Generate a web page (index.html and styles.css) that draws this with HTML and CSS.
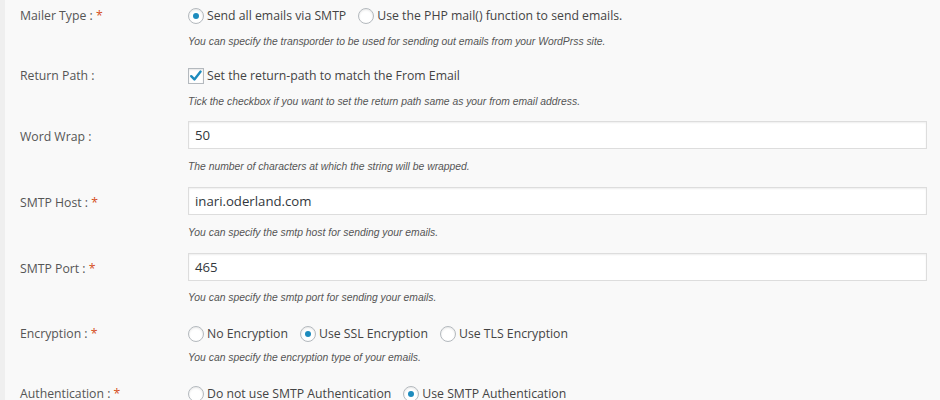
FILE: index.html
```html
<!DOCTYPE html>
<html>
<head>
<meta charset="utf-8">
<link rel="stylesheet" href="styles.css">
</head>
<body>
<div class="page">
  <div class="row row-first">
    <div class="label">Mailer Type : <span class="req">*</span></div>
    <div class="field">
      <div class="choices">
        <label class="choice"><span class="radio checked"></span>Send all emails via SMTP</label>
        <label class="choice"><span class="radio"></span>Use the PHP mail() function to send emails.</label>
      </div>
      <p class="desc">You can specify the transporder to be used for sending out emails from your WordPrss site.</p>
    </div>
  </div>

  <div class="row row-check">
    <div class="label">Return Path :</div>
    <div class="field">
      <div class="choices">
        <label class="choice"><span class="checkbox"><svg viewBox="0 0 16 16" width="16" height="16"><path d="M3.2 8.2 L6.4 11.4 L12.6 3.6" fill="none" stroke="#1e8cbe" stroke-width="2.4" stroke-linecap="round" stroke-linejoin="round"/></svg></span>Set the return-path to match the From Email</label>
      </div>
      <p class="desc">Tick the checkbox if you want to set the return path same as your from email address.</p>
    </div>
  </div>

  <div class="row row-input">
    <div class="label">Word Wrap :</div>
    <div class="field">
      <div class="input">50</div>
      <p class="desc">The number of characters at which the string will be wrapped.</p>
    </div>
  </div>

  <div class="row row-input">
    <div class="label">SMTP Host : <span class="req">*</span></div>
    <div class="field">
      <div class="input">inari.oderland.com</div>
      <p class="desc">You can specify the smtp host for sending your emails.</p>
    </div>
  </div>

  <div class="row row-input">
    <div class="label">SMTP Port : <span class="req">*</span></div>
    <div class="field">
      <div class="input">465</div>
      <p class="desc desc-tight">You can specify the smtp port for sending your emails.</p>
    </div>
  </div>

  <div class="row row-radio">
    <div class="label">Encryption : <span class="req">*</span></div>
    <div class="field">
      <div class="choices">
        <label class="choice"><span class="radio"></span>No Encryption</label>
        <label class="choice"><span class="radio checked"></span>Use SSL Encryption</label>
        <label class="choice"><span class="radio"></span>Use TLS Encryption</label>
      </div>
      <p class="desc desc-close">You can specify the encryption type of your emails.</p>
    </div>
  </div>

  <div class="row row-radio">
    <div class="label">Authentication : <span class="req">*</span></div>
    <div class="field">
      <div class="choices">
        <label class="choice"><span class="radio"></span>Do not use SMTP Authentication</label>
        <label class="choice"><span class="radio checked"></span>Use SMTP Authentication</label>
      </div>
    </div>
  </div>
</div>
</body>
</html>
```

FILE: styles.css
```css
html, body {
  margin: 0;
  padding: 0;
  background: #f9f9f9;
}

.page {
  width: 940px;
  height: 400px;
  overflow: hidden;
  box-sizing: border-box;
  border-left: 5px solid #efefef;
  font-family: "Open Sans", "Liberation Sans", sans-serif;
  font-size: 12.25px;
  color: #444;
}

.row {
  display: flex;
}

.row-first { padding-top: 6px; }
.row-check { padding-top: 17px; }
.row-input { padding-top: 12px; }
.row-input + .row-input { padding-top: 13px; }
.row-radio { padding-top: 19px; }

.label {
  width: 183px;
  flex: none;
  box-sizing: border-box;
  padding-left: 15px;
  line-height: 20px;
  color: #555;
}

.row-input .label {
  padding-top: 6px;
}

.req {
  color: #d54e21;
}

.field {
  flex: 1;
  padding-right: 13px;
}

.choices {
  display: flex;
  align-items: center;
  height: 20px;
  gap: 12px;
}

.choice {
  display: flex;
  align-items: center;
  gap: 3px;
  white-space: nowrap;
  line-height: 20px;
  color: #444;
}

.radio {
  width: 16px;
  height: 16px;
  box-sizing: border-box;
  border: 1px solid #b4b9be;
  border-radius: 50%;
  background: #fff;
  box-shadow: inset 0 1px 2px rgba(0,0,0,0.1);
  display: flex;
  align-items: center;
  justify-content: center;
}

.radio.checked::after {
  content: "";
  width: 6px;
  height: 6px;
  border-radius: 50%;
  background: #1e8cbe;
}

.checkbox {
  width: 16px;
  height: 16px;
  box-sizing: border-box;
  border: 1px solid #b4b9be;
  background: #fff;
  box-shadow: inset 0 1px 2px rgba(0,0,0,0.1);
  display: flex;
  align-items: center;
  justify-content: center;
}

.checkbox svg {
  display: block;
  width: 16px;
  height: 16px;
  flex: none;
}

.input {
  height: 28px;
  box-sizing: border-box;
  border: 1px solid #ddd;
  background: #fff;
  box-shadow: inset 0 1px 2px rgba(0,0,0,0.07);
  padding: 0 6px;
  font-size: 13.2px;
  line-height: 26px;
  color: #32373c;
}

.desc {
  margin: 9px 0 0;
  font-family: "Liberation Sans", Arial, sans-serif;
  font-style: italic;
  font-size: 10.35px;
  line-height: 14px;
  color: #555;
}

.row-input .desc { margin-top: 11px; }
.row-input .desc.desc-tight { margin-top: 10px; }
.desc.desc-close { margin-top: 7px; }
```
